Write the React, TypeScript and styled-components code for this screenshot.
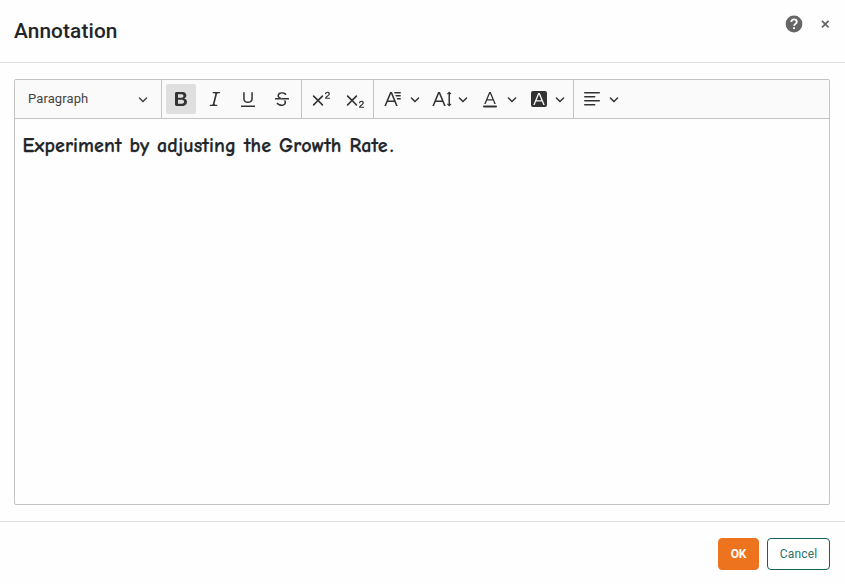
import React from 'react';
import styled, { createGlobalStyle } from 'styled-components';

const GlobalStyle = createGlobalStyle`
  * { box-sizing: border-box; }
  body { margin: 0; background: #fefefe; font-family: Roboto, sans-serif; color: #212529; }
`;

const Dialog = styled.div`
  display: flex;
  flex-direction: column;
  width: 845px;
  height: 584px;
  background: #fefefe;
`;

const Header = styled.header`
  display: flex;
  justify-content: space-between;
  height: 63px;
  padding: 0 15px 0 14px;
  border-bottom: 1px solid #dee0e0;
`;

const Title = styled.h1`
  margin: 0;
  font-size: 20.8px;
  line-height: 24px;
  padding-top: 19px;
  font-weight: 500;
  letter-spacing: 0.12px;
`;

const HeaderActions = styled.div`
  display: flex;
  gap: 18px;
  padding-top: 15px;
`;

const HeaderButton = styled.button<{ $width: number }>`
  display: flex;
  align-items: center;
  justify-content: center;
  width: ${p => p.$width}px;
  height: 18px;
  padding: 0;
  border: 0;
  background: none;
  color: #666;
`;

const Editor = styled.main`
  display: flex;
  flex-direction: column;
  height: 426px;
  margin: 16px 15px 16px 14px;
  border: 1px solid #c4c4c4;
  border-radius: 2px;
`;

const Toolbar = styled.div`
  display: flex;
  height: 39px;
  background: #fafafa;
  border-bottom: 1px solid #c4c4c4;
`;

const Group = styled.div<{ $width?: number; $pad?: number; $gap?: number }>`
  display: flex;
  align-items: center;
  gap: ${p => p.$gap ?? 3.7}px;
  width: ${p => (p.$width ? `${p.$width}px` : 'auto')};
  padding-left: ${p => p.$pad ?? 4}px;
  border-right: ${p => (p.$width ? '1px solid #c4c4c4' : '0')};
`;

const HeadingSelect = styled.button`
  display: flex;
  align-items: center;
  justify-content: space-between;
  width: 147px;
  padding: 0 13px 0 13px;
  border: 0;
  border-right: 1px solid #c4c4c4;
  background: none;
  font: 400 13px Roboto, sans-serif;
  letter-spacing: 0.1px;
  color: #444;
`;

const HeadingLabel = styled.span`
  padding-bottom: 2px;
`;

const ToolButton = styled.button<{ $active?: boolean }>`
  display: flex;
  flex: none;
  align-items: center;
  justify-content: center;
  width: 30px;
  height: 30px;
  padding: 0;
  border: 0;
  border-radius: 2px;
  background: ${p => (p.$active ? '#dedfde' : 'transparent')};
  color: #333;
`;

const SplitButton = styled(ToolButton)`
  width: 48.5px;
  justify-content: flex-start;
  gap: 6.8px;
  padding-left: 5px;
`;

const Content = styled.div`
  flex: 1;
  padding: 14px 7.5px;
`;

const Paragraph = styled.p`
  margin: 0;
  font: 700 20px/25px 'Comic Sans MS', 'Comic Neue', Lato, sans-serif;
  letter-spacing: 0.12px;
  word-spacing: 0.6px;
  white-space: nowrap;
  -webkit-text-stroke: 0.25px currentColor;
`;

const FullStop = styled.span`
  margin-left: 2.5px;
`;

const Footer = styled.footer`
  display: flex;
  justify-content: flex-end;
  gap: 8px;
  flex: 1;
  padding: 16px 15px 14px;
  border-top: 1px solid #dee0e0;
`;

const Action = styled.button<{ $primary?: boolean }>`
  width: ${p => (p.$primary ? 41 : 63)}px;
  height: 32px;
  padding: 0;
  border: 1px solid ${p => (p.$primary ? '#ee731e' : '#13635a')};
  border-radius: 4px;
  background: ${p => (p.$primary ? '#ee731e' : '#fff')};
  color: ${p => (p.$primary ? '#fff' : '#29706a')};
  font: ${p => (p.$primary ? 700 : 400)} 12px Roboto, sans-serif;
  letter-spacing: ${p => (p.$primary ? -0.2 : 0.15)}px;
`;

const superTwo =
  'M15.677 8.678h2.549c.254 0 .447.05.58.152a.49.49 0 0 1 .201.413.54.54 0 0 1-.159.393c-.105.108-.266.162-.48.162h-3.594c-.245 0-.435-.066-.572-.197a.621.621 0 0 1-.205-.463c0-.114.044-.265.132-.453a1.62 1.62 0 0 1 .288-.444c.433-.436.824-.81 1.172-1.122.348-.312.597-.517.747-.615.267-.183.49-.368.667-.553.177-.185.312-.375.405-.57.093-.194.139-.384.139-.57a1.008 1.008 0 0 0-.554-.917 1.197 1.197 0 0 0-.56-.133c-.426 0-.761.182-1.005.546a2.332 2.332 0 0 0-.164.39 1.609 1.609 0 0 1-.258.488c-.096.114-.237.17-.423.17a.558.558 0 0 1-.405-.156.568.568 0 0 1-.161-.427c0-.218.05-.446.151-.683.101-.238.252-.453.452-.646s.454-.349.762-.467a2.998 2.998 0 0 1 1.081-.178c.498 0 .923.076 1.274.228a1.916 1.916 0 0 1 1.004 1.032 1.984 1.984 0 0 1-.156 1.794c-.2.32-.405.572-.613.754-.208.182-.558.468-1.048.857-.49.39-.826.691-1.008.906a2.703 2.703 0 0 0-.24.309z';
const cross =
  'M7.03 10.349l3.818-3.819a.8.8 0 1 1 1.132 1.132L8.16 11.48l3.819 3.818a.8.8 0 1 1-1.132 1.132L7.03 12.61l-3.818 3.82a.8.8 0 1 1-1.132-1.132L5.9 11.48 2.08 7.662A.8.8 0 1 1 3.212 6.53l3.818 3.82z';

const icons = {
  bold: 'M10.187 17H5.773c-.637 0-1.092-.138-1.364-.415-.273-.277-.409-.718-.409-1.323V4.738c0-.617.14-1.062.419-1.332.279-.27.73-.406 1.354-.406h4.68c.69 0 1.288.041 1.793.124.506.083.96.242 1.36.478.341.197.644.447.906.75a3.262 3.262 0 0 1 .808 2.162c0 1.401-.722 2.426-2.167 3.075C15.05 10.175 16 11.315 16 13.01a3.756 3.756 0 0 1-2.296 3.504 6.1 6.1 0 0 1-1.517.377c-.571.073-1.238.11-2 .11zm-.217-6.217H7v4.087h3.069c1.977 0 2.965-.69 2.965-2.072 0-.707-.256-1.22-.768-1.537-.512-.319-1.277-.478-2.296-.478zM7 5.13v3.619h2.606c.729 0 1.292-.067 1.69-.2a1.6 1.6 0 0 0 .91-.765c.165-.267.247-.566.247-.897 0-.707-.26-1.176-.778-1.409-.519-.232-1.31-.348-2.375-.348H7z',
  italic: 'm9.586 14.633.021.004c-.036.335.095.655.393.962.082.083.173.15.274.201h1.474a.6.6 0 1 1 0 1.2H5.304a.6.6 0 0 1 0-1.2h1.15c.474-.07.809-.182 1.005-.334.157-.122.291-.32.404-.597l2.416-9.55a1.053 1.053 0 0 0-.281-.823 1.12 1.12 0 0 0-.442-.296H8.15a.6.6 0 0 1 0-1.2h6.443a.6.6 0 1 1 0 1.2h-1.195c-.376.056-.65.155-.823.296-.215.175-.423.439-.623.79l-2.366 9.347z',
  underline: 'M3 18v-1.5h14V18zm2.2-8V3.6c0-.4.4-.6.8-.6.3 0 .7.2.7.6v6.2c0 2 1.3 2.8 3.2 2.8 1.9 0 3.4-.9 3.4-2.9V3.6c0-.3.4-.5.8-.5.3 0 .7.2.7.5V10c0 2.7-2.2 4-4.9 4-2.6 0-4.7-1.2-4.7-4z',
  strike: 'M7 16.4c-.8-.4-1.5-.9-2.2-1.5a.6.6 0 0 1-.2-.5l.3-.6h1c1 1.2 2.1 1.7 3.7 1.7 1 0 1.8-.3 2.3-.6.6-.4.6-1.2.6-1.3.2-1.2-.9-2.1-.9-2.1h2.1c.3.7.4 1.2.4 1.7v.8l-.6 1.2c-.6.8-1.1 1-1.6 1.2a6 6 0 0 1-2.4.6c-1 0-1.8-.3-2.5-.6zM6.8 9 6 8.3c-.4-.5-.5-.8-.5-1.6 0-.7.1-1.3.5-1.8.4-.6 1-1 1.6-1.3a6.3 6.3 0 0 1 4.7 0 4 4 0 0 1 1.7 1l.3.7c0 .1.2.4-.2.7-.4.2-.9.1-1 0a3 3 0 0 0-1.2-1c-.4-.2-1-.3-2-.4-.7 0-1.4.2-2 .6-.8.6-1 .8-1 1.5 0 .8.5 1 1.2 1.5.6.4 1.1.7 1.9 1zM3 10.5V9h14v1.5z',
  family: 'M11.03 3h6.149a.75.75 0 1 1 0 1.5h-5.514zm1.27 3h4.879a.75.75 0 1 1 0 1.5h-4.244zm1.27 3h3.609a.75.75 0 1 1 0 1.5h-2.973zm-2.754 2.5L8.038 4.785 5.261 11.5zm.62 1.5H4.641l-1.666 4.028H1.312l5.789-14h1.875l5.789 14h-1.663z',
  size: 'M9.816 11.5 7.038 4.785 4.261 11.5zm.62 1.5H3.641l-1.666 4.028H.312l5.789-14h1.875l5.789 14h-1.663zm7.55 2.279.779-.779.707.707-2.265 2.265-2.193-2.265.707-.707.765.765V4.825c0-.042 0-.083.002-.123l-.77.77-.707-.707L17.207 2.5l2.265 2.265-.707.707-.782-.782c.002.043.003.089.003.135z',
  color: 'M12.4 10.3 10 4.5l-2.4 5.8h4.8zm.5 1.2H7.1L5.7 15H4.2l5-12h1.6l5 12h-1.5L13 11.5zm3.1 7H4a1 1 0 0 1 0-2h12a1 1 0 0 1 0 2z',
  highlight: 'M4 2h12a2 2 0 0 1 2 2v12a2 2 0 0 1-2 2H4a2 2 0 0 1-2-2V4a2 2 0 0 1 2-2zm8.38 9.262H7.62L10 5.506l2.38 5.756zm.532 1.285L14.34 16h1.426L10.804 4H9.196L4.234 16H5.66l1.428-3.453h5.824z',
  align: 'M2 3.75c0 .414.336.75.75.75h14.5a.75.75 0 1 0 0-1.5H2.75a.75.75 0 0 0-.75.75zm0 8c0 .414.336.75.75.75h14.5a.75.75 0 1 0 0-1.5H2.75a.75.75 0 0 0-.75.75zm0 4c0 .414.336.75.75.75h9.929a.75.75 0 1 0 0-1.5H2.75a.75.75 0 0 0-.75.75zm0-8c0 .414.336.75.75.75h9.929a.75.75 0 1 0 0-1.5H2.75a.75.75 0 0 0-.75.75z',
};

const Glyph = styled.svg`
  display: block;
  flex: none;
  fill: currentColor;
`;

const Icon = ({ name }: { name: keyof typeof icons }) => (
  <Glyph width="20" height="20" viewBox="0 0 20 20" fillRule="evenodd"><path d={icons[name]} /></Glyph>
);

const ScriptIcon = ({ sub }: { sub?: boolean }) => (
  <Glyph width="20" height="20" viewBox="0 0 20 20" overflow="visible">
    <path d={superTwo} transform={sub ? 'translate(0 9)' : undefined} />
    <path d={cross} />
  </Glyph>
);

const Chevron = () => (
  <Glyph width="10" height="10" viewBox="0 0 10 10">
    <path d="M.941 4.523a.75.75 0 1 1 1.06-1.06l3.006 3.005 3.005-3.005a.75.75 0 1 1 1.06 1.06l-3.549 3.55a.75.75 0 0 1-1.168-.136L.941 4.523z" />
  </Glyph>
);

const Dropdown = ({ name }: { name: keyof typeof icons }) => (
  <SplitButton aria-label={name}><Icon name={name} /><Chevron /></SplitButton>
);

export default function App() {
  return (
    <>
      <GlobalStyle />
      <Dialog>
        <Header>
          <Title>Annotation</Title>
          <HeaderActions>
            <HeaderButton $width={18} aria-label="Help">
              <Glyph width="18" height="18" viewBox="0 0 18 18">
                <circle cx="9" cy="9" r="8.4" />
                <path d="M6.3 7.1C6.3 5.3 7.5 4.4 9.1 4.4s2.7.9 2.7 2.4c0 2-2.7 2.1-2.7 4" fill="none" stroke="#fff" strokeWidth="1.8" />
                <path d="M8.1 12.2H10V14H8.1z" fill="#fff" />
              </Glyph>
            </HeaderButton>
            <HeaderButton $width={9} aria-label="Close">
              <Glyph width="9" height="9" viewBox="0 0 9 9">
                <path d="M1 .8l6.6 6.6M7.6 .8L1 7.4" fill="none" stroke="currentColor" strokeWidth="1.8" />
              </Glyph>
            </HeaderButton>
          </HeaderActions>
        </Header>
        <Editor>
          <Toolbar>
            <HeadingSelect><HeadingLabel>Paragraph</HeadingLabel><Chevron /></HeadingSelect>
            <Group $width={140} $gap={3.6}>
              <ToolButton $active aria-label="Bold"><Icon name="bold" /></ToolButton>
              <ToolButton aria-label="Italic"><Icon name="italic" /></ToolButton>
              <ToolButton aria-label="Underline"><Icon name="underline" /></ToolButton>
              <ToolButton aria-label="Strikethrough"><Icon name="strike" /></ToolButton>
            </Group>
            <Group $width={72}>
              <ToolButton aria-label="Superscript"><ScriptIcon /></ToolButton>
              <ToolButton aria-label="Subscript"><ScriptIcon sub /></ToolButton>
            </Group>
            <Group $width={200} $gap={0}>
              <Dropdown name="family" />
              <Dropdown name="size" />
              <Dropdown name="color" />
              <Dropdown name="highlight" />
            </Group>
            <Group $gap={0} $pad={3}>
              <Dropdown name="align" />
            </Group>
          </Toolbar>
          <Content>
            <Paragraph>Experiment by adjusting the Growth Rate<FullStop>.</FullStop></Paragraph>
          </Content>
        </Editor>
        <Footer>
          <Action $primary>OK</Action>
          <Action>Cancel</Action>
        </Footer>
      </Dialog>
    </>
  );
}
